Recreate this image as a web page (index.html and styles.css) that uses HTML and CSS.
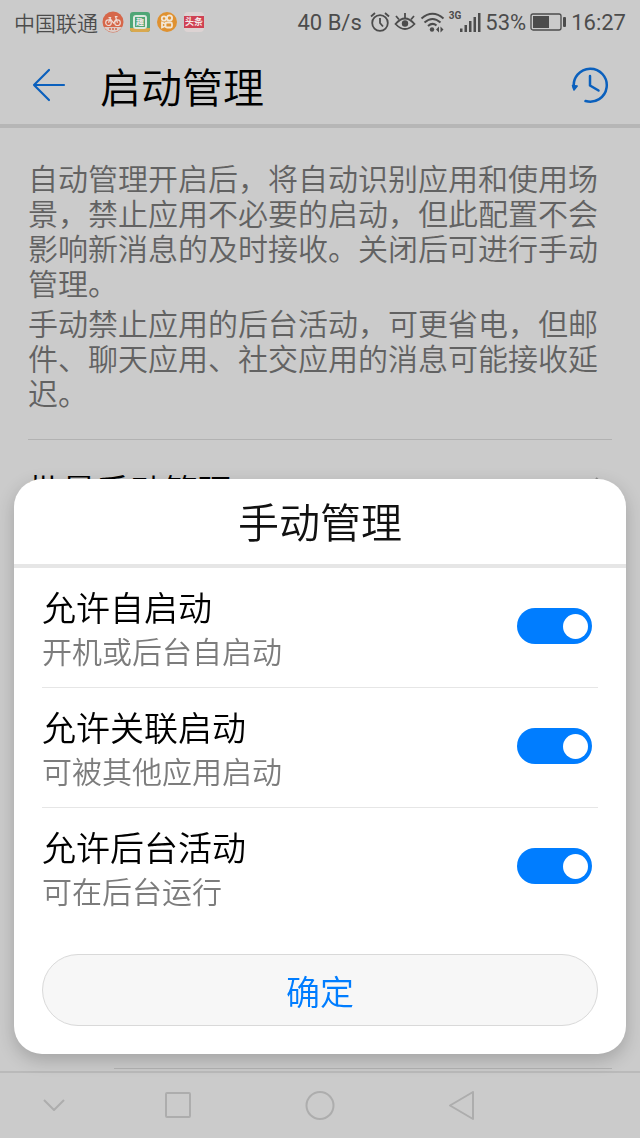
FILE: index.html
```html
<!DOCTYPE html>
<html lang="zh-CN">

<head>
    <meta charset="UTF-8">
    <meta name="viewport" content="width=device-width, initial-scale=1.0">
    <title>启动管理</title>
    <link rel="stylesheet" href="styles.css">
</head>

<body>
    <div class="status-bar">
        <span class="carrier">中国联通</span>
        <div class="app-icons">
            <svg width="22" height="22" viewBox="0 0 22 22">
                <circle cx="11" cy="11" r="10.5" fill="#d6674a" />
                <path d="M2 16h18a10.5 10.5 0 0 1-18 0z" fill="#dccdc8" />
                <g fill="none" stroke="#f0dcd5" stroke-width="1.2">
                    <circle cx="6.5" cy="11.7" r="2.8" />
                    <circle cx="15.5" cy="11.7" r="2.8" />
                    <path d="M6.5 11.7l2-5h-2M8.5 8l3 4 3-4M15.5 11.7l-2-6h2" />
                </g>
                <path d="M7 18h2M10 18h2M13 18h2" stroke="#d6674a" stroke-width="1.5" />
            </svg>
            <svg width="22" height="22" viewBox="0 0 22 22">
                <rect x="1" y="1" width="20" height="20" rx="3" fill="#4fa676" />
                <path d="M1 17h20v1a3 3 0 0 1-3 3H4a3 3 0 0 1-3-3z" fill="#d9a84e" />
                <rect x="4" y="4" width="14" height="14" rx="3" fill="#dce8df" />
                <rect x="6" y="6" width="10" height="10" fill="#4fa676" />
                <text class="app-char" x="11" y="14" font-size="8">趣</text>
            </svg>
            <svg width="22" height="22" viewBox="0 0 22 22">
                <circle cx="11" cy="11" r="10" fill="#df9130" />
                <g fill="none" stroke="#f2e6d5" stroke-width="1.8">
                    <circle cx="8" cy="7.5" r="2.2" />
                    <circle cx="13.5" cy="7" r="2.6" />
                    <rect x="9.5" y="11.5" width="6.5" height="5" rx="1.5" />
                    <path d="M9.5 13L6 11.5v5l3.5-1.5" />
                </g>
            </svg>
            <svg width="22" height="22" viewBox="0 0 22 22">
                <rect x="1" y="1" width="20" height="20" rx="4" fill="#ddd3d3" />
                <rect x="1" y="5" width="20" height="12" fill="#cf4153" />
                <text class="app-char" x="11" y="14" font-size="9">头条</text>
            </svg>
        </div>
        <div class="indicators">
            <span class="speed">40 B/s</span>
            <svg width="20" height="22" viewBox="0 0 20 22" fill="none" stroke="#4c4c4c" stroke-width="1.8">
                <circle cx="10" cy="12" r="7.8" />
                <path d="M10 7v5l3 3.5M1 5.5L5 2M19 5.5L15 2" />
            </svg>
            <svg width="22" height="22" viewBox="0 0 22 22" fill="none" stroke="#4c4c4c" stroke-width="1.8">
                <path d="M1.5 13Q11 2 20.5 13Q11 23 1.5 13z" />
                <path d="M11 7V2M5 8.5L2 5M17 8.5L20 5" />
                <circle cx="11" cy="12.5" r="3.2" fill="#4c4c4c" stroke="none" />
            </svg>
            <svg width="25" height="22" viewBox="0 0 25 22" fill="none" stroke="#4c4c4c" stroke-width="2">
                <path d="M1.5 7.5Q12.5-2 23.5 7.5M4.5 11.5Q12.5 4.5 20.5 11.5M8 15Q12.5 11 16.5 14.5" />
                <circle cx="12" cy="18.5" r="2.2" fill="#4c4c4c" stroke="none" />
                <path d="M19 15.5v6l-3-3zM20.5 15.5v6l3-3z" fill="#4c4c4c" stroke="none" />
            </svg>
            <span class="network">3G</span>
            <svg width="21" height="22" viewBox="0 0 21 22" fill="#4c4c4c">
                <path d="M0 17.5h2.5V21H0zM4.5 14H7v7H4.5zM9 10h2.5v11H9zM13.5 6H16v15h-2.5zM18 2h2.5v19H18z" />
            </svg>
            <span class="percent">53%</span>
            <svg width="37" height="22" viewBox="0 0 37 22">
                <rect x="1" y="3" width="30" height="16" rx="2" fill="none" stroke="#4c4c4c" stroke-width="1.3" />
                <rect x="3" y="5" width="16" height="12" fill="#4c4c4c" />
                <rect x="33" y="6" width="3" height="10" rx="1" fill="#4c4c4c" />
            </svg>
            <span class="time">16:27</span>
        </div>
    </div>

    <header class="header">
        <button class="icon-button" aria-label="返回">
            <svg width="34" height="34" viewBox="0 0 34 34" fill="none" stroke="#0b60bd" stroke-width="2.2" stroke-linecap="round" stroke-linejoin="round">
                <path d="M32 17H2M17 2L2 17l15 15" />
            </svg>
        </button>
        <h1>启动管理</h1>
        <button class="icon-button" aria-label="历史记录">
            <svg width="38" height="38" viewBox="0 0 38 38" fill="none" stroke="#0b60bd" stroke-width="2.5" stroke-linecap="round" stroke-linejoin="round">
                <path d="M3 22A16.5 16.5 0 1 1 14.500 35" />
                <path d="M19 10v9.5l8.5 5" />
                <path d="M1.5 19.5l1.5 4.5 3.2-4z" fill="#0b60bd" stroke-width="1.5" />
            </svg>
        </button>
    </header>

    <main class="content">
        <div class="intro">
            <p>自动管理开启后，将自动识别应用和使用场景，禁止应用不必要的启动，但此配置不会影响新消息的及时接收。关闭后可进行手动管理。</p>
            <p>手动禁止应用的后台活动，可更省电，但邮件、聊天应用、社交应用的消息可能接收延迟。</p>
        </div>
        <a href="#" class="batch-row">
            <span>批量手动管理</span>
            <svg width="18" height="28" viewBox="0 0 18 28" fill="none" stroke="#8c8c8c" stroke-width="2">
                <path d="M2 3l11 11L2 25" />
            </svg>
        </a>
        <div class="app-divider"></div>
    </main>

    <nav class="nav-bar">
        <button aria-label="收起">
            <svg width="24" height="16" viewBox="0 0 24 16"><path d="M2 2l10 10L22 2" /></svg>
        </button>
        <button aria-label="最近任务">
            <svg width="28" height="28" viewBox="0 0 28 28"><rect x="2" y="1" width="24" height="24" rx="1" /></svg>
        </button>
        <button aria-label="主屏幕">
            <svg width="30" height="30" viewBox="0 0 30 30"><circle cx="15" cy="14.5" r="13.5" /></svg>
        </button>
        <button aria-label="后退">
            <svg width="30" height="30" viewBox="0 0 30 30"><path d="M26 1v27L3 14.5z" /></svg>
        </button>
    </nav>

    <div class="dialog" role="dialog" aria-labelledby="dialog-title">
        <h2 id="dialog-title">手动管理</h2>
        <div class="options">
            <label class="option" for="autoStart">
                <span class="option-text">
                    <span class="option-title">允许自启动</span>
                    <span class="option-desc">开机或后台自启动</span>
                </span>
                <input type="checkbox" id="autoStart" class="switch" checked>
            </label>
            <label class="option" for="linkedStart">
                <span class="option-text">
                    <span class="option-title">允许关联启动</span>
                    <span class="option-desc">可被其他应用启动</span>
                </span>
                <input type="checkbox" id="linkedStart" class="switch" checked>
            </label>
            <label class="option" for="background">
                <span class="option-text">
                    <span class="option-title">允许后台活动</span>
                    <span class="option-desc">可在后台运行</span>
                </span>
                <input type="checkbox" id="background" class="switch" checked>
            </label>
        </div>
        <button class="confirm-button">确定</button>
    </div>
</body>

</html>
```
FILE: styles.css
```css
* {
    box-sizing: border-box;
}

body {
    margin: 0;
    min-height: 100vh;
    display: flex;
    flex-direction: column;
    background-color: #cbcbcb;
    color: #000;
    font-family: Roboto, "Noto Sans CJK SC", sans-serif;
    font-weight: 350;
}

h1,
h2,
p {
    margin: 0;
    font-weight: 350;
}

button {
    padding: 0;
    border: none;
    background: none;
    font-family: inherit;
    font-weight: inherit;
    cursor: pointer;
}

svg {
    display: block;
    flex-shrink: 0;
}

/* status bar */
.status-bar {
    display: flex;
    align-items: center;
    height: 44px;
    padding: 0 14px;
    color: #4c4c4c;
    font-size: 22px;
    white-space: nowrap;
}

.carrier {
    font-size: 21px;
}

.app-icons {
    display: flex;
    gap: 5px;
    margin-left: 4px;
}

.app-char {
    fill: #f5e9e9;
    font-weight: 700;
    text-anchor: middle;
}

.indicators {
    display: flex;
    align-items: center;
    gap: 4px;
    margin-left: auto;
    font-weight: 400;
}

.speed {
    margin-right: 4px;
}

.network {
    align-self: flex-start;
    font-size: 10px;
    font-weight: 700;
    line-height: 12px;
    margin-right: -5px;
}

/* header */
.header {
    display: flex;
    align-items: center;
    height: 84px;
    padding: 2px 31px 0 32px;
    border-bottom: 4px solid #b6b6b6;
}

.header h1 {
    flex: 1;
    margin-left: 34px;
    padding-top: 8px;
    font-size: 41px;
    line-height: 60px;
}

/* page content */
.content {
    flex: 1;
    display: flex;
    flex-direction: column;
    padding: 0 28px;
}

.intro {
    padding: 34px 0 27px;
    border-bottom: 1px solid #b2b2b2;
    color: #626262;
    font-size: 30px;
    line-height: 35px;
}

.intro p + p {
    margin-top: 5px;
}

.batch-row {
    display: flex;
    align-items: center;
    justify-content: space-between;
    height: 98px;
    color: #000;
    font-size: 34px;
    text-decoration: none;
}

.app-divider {
    margin: auto 0 2px 86px;
    border-bottom: 1px solid #b2b2b2;
}

/* navigation keys */
.nav-bar {
    display: grid;
    grid-template-columns: 107px 1fr 1fr 1fr 107px;
    height: 67px;
    border-top: 2px solid #bababa;
}

.nav-bar button {
    display: flex;
    align-items: center;
    justify-content: center;
}

.nav-bar svg {
    fill: none;
    stroke: #adadad;
    stroke-width: 2;
    stroke-linejoin: round;
}

/* dialog */
.dialog {
    position: fixed;
    left: 14px;
    right: 14px;
    bottom: 84px;
    border-radius: 28px;
    background-color: #fff;
    box-shadow: 0 6px 18px rgba(0, 0, 0, 0.2);
}

.dialog h2 {
    padding-top: 5px;
    border-bottom: 4px solid #e6e6e6;
    color: #111;
    font-size: 41px;
    line-height: 80px;
    text-align: center;
}

.options {
    padding: 0 28px;
}

.option {
    display: flex;
    align-items: center;
    justify-content: space-between;
    padding: 14px 6px 17px 0;
    border-bottom: 1px solid #e6e6e6;
    cursor: pointer;
}

.option:last-child {
    border-bottom: none;
}

.option-title,
.option-desc {
    display: block;
}

.option-title {
    font-size: 34px;
    line-height: 54px;
}

.option-desc {
    color: #7c7c7c;
    font-size: 30px;
    line-height: 34px;
}

.switch {
    appearance: none;
    display: flex;
    align-items: center;
    width: 75px;
    height: 36px;
    margin: 0;
    padding: 0 4px;
    border-radius: 18px;
    background-color: #b3b3b3;
    cursor: pointer;
}

.switch::before {
    content: "";
    width: 25px;
    height: 25px;
    border-radius: 50%;
    background-color: #fff;
}

.switch:checked {
    justify-content: flex-end;
    background-color: #007dff;
}

.confirm-button {
    display: block;
    width: calc(100% - 56px);
    height: 72px;
    margin: 27px 28px 28px;
    border: 1px solid #d9d9d9;
    border-radius: 36px;
    background-color: #f7f7f7;
    color: #007dff;
    font-size: 34px;
}
```
